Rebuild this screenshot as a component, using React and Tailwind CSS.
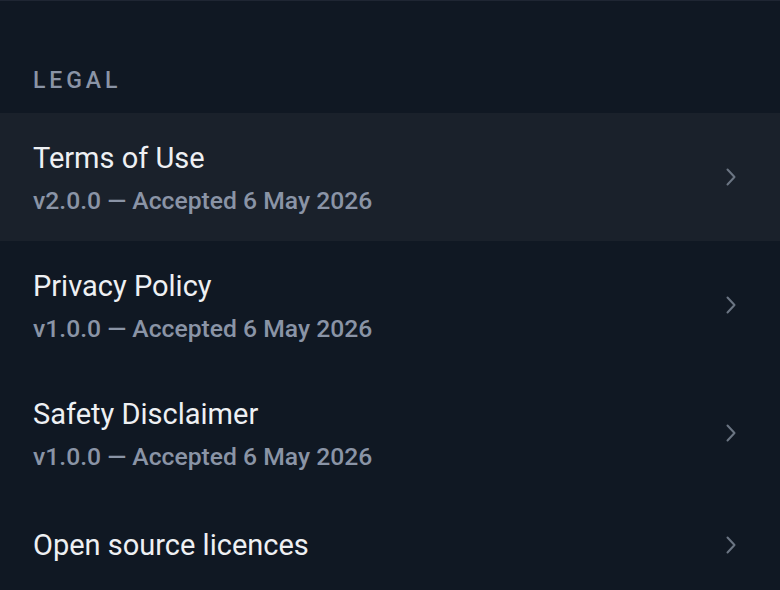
const items = [
  { title: 'Terms of Use', sub: 'v2.0.0 — Accepted 6 May 2026', active: true },
  { title: 'Privacy Policy', sub: 'v1.0.0 — Accepted 6 May 2026' },
  { title: 'Safety Disclaimer', sub: 'v1.0.0 — Accepted 6 May 2026' },
  { title: 'Open source licences' },
];

const Chevron = () => (
  <svg width="12" height="20" viewBox="0 0 12 20" fill="none" className="shrink-0">
    <path d="M2.5 2.5 L9.5 10 L2.5 17.5" stroke="#6b7583" strokeWidth="2" strokeLinecap="round" strokeLinejoin="round" />
  </svg>
);

export default function App() {
  return (
    <div className="w-[780px] h-[590px] overflow-hidden bg-[#101823] border-t border-[#1f2633]" style={{ fontFamily: 'Roboto, "Liberation Sans", sans-serif' }}>
      <div className="h-[112px] px-[33px] pt-[66px]">
        <div className="text-[23px] leading-[28px] font-medium tracking-[0.17em] text-[#8a94a6]">LEGAL</div>
      </div>
      {items.map((item) => (
        <div
          key={item.title}
          className={`flex items-center justify-between pl-[33px] pr-[43px] ${item.sub ? 'h-[128px]' : 'h-[96px]'} ${item.active ? 'bg-[#1a212b]' : ''}`}
        >
          <div className={`flex flex-col ${item.sub ? 'pt-[4px]' : ''}`}>
            <div className="text-[29px] leading-[36px] text-[#eef0f3]">{item.title}</div>
            {item.sub && (
              <div className="mt-[7px] text-[24.7px] leading-[36px] font-medium text-[#8a94a6]">{item.sub}</div>
            )}
          </div>
          <Chevron />
        </div>
      ))}
    </div>
  );
}
